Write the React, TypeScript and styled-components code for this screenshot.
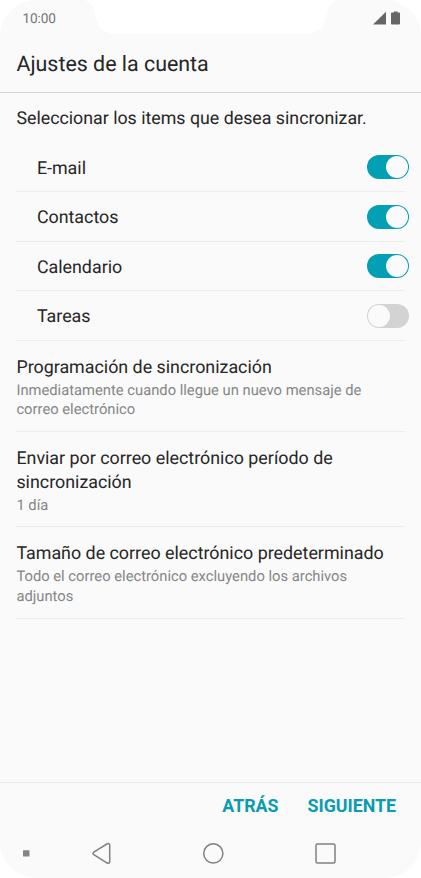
import React from "react";
import styled, { createGlobalStyle } from "styled-components";

const GlobalStyle = createGlobalStyle`
  * { box-sizing: border-box; }
  body { margin: 0; background: #fff; font-family: Roboto, "Liberation Sans", sans-serif; text-rendering: geometricPrecision; }
`;

const Screen = styled.div`
  position: relative;
  display: flex;
  flex-direction: column;
  width: 421px;
  height: 878px;
  overflow: hidden;
  border-radius: 36px;
  background: #fafafa;
  color: #262626;
`;

const Notch = styled.svg`
  position: absolute;
  top: 0;
  left: 80px;
`;

const StatusBar = styled.div`
  display: flex;
  flex: none;
  align-items: center;
  justify-content: space-between;
  height: 36px;
  padding: 0 20px 0 22.5px;
`;

const Clock = styled.span`
  padding-top: 2px;
  font-size: 13.6px;
  letter-spacing: -0.1px;
  color: #757575;
`;

const Header = styled.header`
  flex: none;
  height: 57px;
  padding: 15px 16px 0 16.5px;
  border-bottom: 1px solid #d4d4d4;
`;

const Title = styled.h1`
  margin: 0;
  font-size: 21.4px;
  line-height: 28px;
  font-weight: 400;
  white-space: nowrap;
`;

const Content = styled.main`
  flex: 1;
  padding: 0 16px 0 16.4px;
`;

const Prompt = styled.p`
  margin: 0;
  height: 49.5px;
  padding-top: 14px;
  font-size: 17.8px;
  line-height: 24px;
  white-space: nowrap;
`;

const SyncRow = styled.div`
  display: flex;
  align-items: center;
  justify-content: space-between;
  height: 49.5px;
  margin-right: -3.5px;
  padding-left: 20.5px;
  font-size: 17.85px;
  background: linear-gradient(#ededed, #ededed) left bottom / 389px 1px no-repeat;
`;

const SyncLabel = styled.span`
  padding-top: 2px;
`;

const Switch = styled.span<{ $on: boolean }>`
  display: flex;
  justify-content: ${(p) => (p.$on ? "flex-end" : "flex-start")};
  width: 42px;
  height: 24px;
  padding: 1px;
  border-radius: 12px;
  background: ${(p) => (p.$on ? "#03a0b5" : "#d3d3d3")};
`;

const Knob = styled.span`
  width: 22px;
  height: 22px;
  border-radius: 50%;
  background: #fafafa;
`;

const Setting = styled.section<{ $height: number }>`
  height: ${(p) => p.$height}px;
  padding-top: 15px;
  border-bottom: 1px solid #ededed;
`;

const SettingTitle = styled.h2`
  margin: 0 -10px 0 0;
  font-size: 17.85px;
  line-height: 24px;
  font-weight: 400;
`;

const SettingDetail = styled.p`
  margin: 1px 0 0;
  font-size: 14.75px;
  line-height: 19.5px;
  color: #868686;
`;

const Actions = styled.footer`
  display: flex;
  flex: none;
  align-items: flex-start;
  justify-content: flex-end;
  gap: 29px;
  height: 47px;
  padding: 11px 25px 0 0;
  border-top: 1px solid #ededed;
`;

const Action = styled.button`
  padding: 0;
  border: 0;
  background: none;
  color: #079caf;
  font: 700 17.8px/24px Roboto, "Liberation Sans", sans-serif;
`;

const NavBar = styled.svg`
  display: block;
  flex: none;
`;

const syncItems = [
  { label: "E-mail", on: true },
  { label: "Contactos", on: true },
  { label: "Calendario", on: true },
  { label: "Tareas", on: false },
];

export default function App() {
  return (
    <>
      <GlobalStyle />
      <Screen>
        <Notch width="262" height="36" viewBox="80 0 262 36">
          <path d="M84 0C91 2 94 7 95 14C97 27 104 34 116 34H305C318 34 325 27 327 14C328 7 331 2 338 0Z" fill="#fff" />
        </Notch>
        <StatusBar>
          <Clock>10:00</Clock>
          <svg width="28" height="14" viewBox="0 0 28 14" fill="#666">
            <path d="M0 13.5L13 .8V13.5Z" />
            <path d="M19 1.5H21V.5H24.500V1.500H26Q27 1.500 27 2.500V12.500Q27 13.500 26 13.500H19Q18 13.500 18 12.500V2.500Q18 1.500 19 1.500Z" />
          </svg>
        </StatusBar>
        <Header>
          <Title>Ajustes de la cuenta</Title>
        </Header>
        <Content>
          <Prompt>Seleccionar los items que desea sincronizar.</Prompt>
          {syncItems.map((item) => (
            <SyncRow key={item.label}>
              <SyncLabel>{item.label}</SyncLabel>
              <Switch $on={item.on} role="switch" aria-checked={item.on}>
                <Knob />
              </Switch>
            </SyncRow>
          ))}
          <Setting $height={91.5}>
            <SettingTitle>Programación de sincronización</SettingTitle>
            <SettingDetail>
              Inmediatamente cuando llegue un nuevo mensaje de
              <br />
              correo electrónico
            </SettingDetail>
          </Setting>
          <Setting $height={95}>
            <SettingTitle>
              Enviar por correo electrónico período de
              <br />
              sincronización
            </SettingTitle>
            <SettingDetail>1 día</SettingDetail>
          </Setting>
          <Setting $height={91.5}>
            <SettingTitle>Tamaño de correo electrónico predeterminado</SettingTitle>
            <SettingDetail>
              Todo el correo electrónico excluyendo los archivos
              <br />
              adjuntos
            </SettingDetail>
          </Setting>
        </Content>
        <Actions>
          <Action>ATRÁS</Action>
          <Action>SIGUIENTE</Action>
        </Actions>
        <NavBar width="421" height="49" viewBox="0 829 421 49" fill="none" stroke="#808080" strokeWidth="1.5">
          <rect x="23" y="850.300" width="6.500" height="6.300" rx=".6" fill="#858585" stroke="none" />
          <path d="M93.800 852.100L106.800 844Q109.700 842.700 109.700 845.500V861.500Q109.700 864.200 106.800 862.800L93.800 854.700Q92.300 853.400 93.800 852.100Z" />
          <circle cx="213.300" cy="853.400" r="9.600" />
          <rect x="316" y="844" width="19" height="19" rx="1.500" />
        </NavBar>
      </Screen>
    </>
  );
}
